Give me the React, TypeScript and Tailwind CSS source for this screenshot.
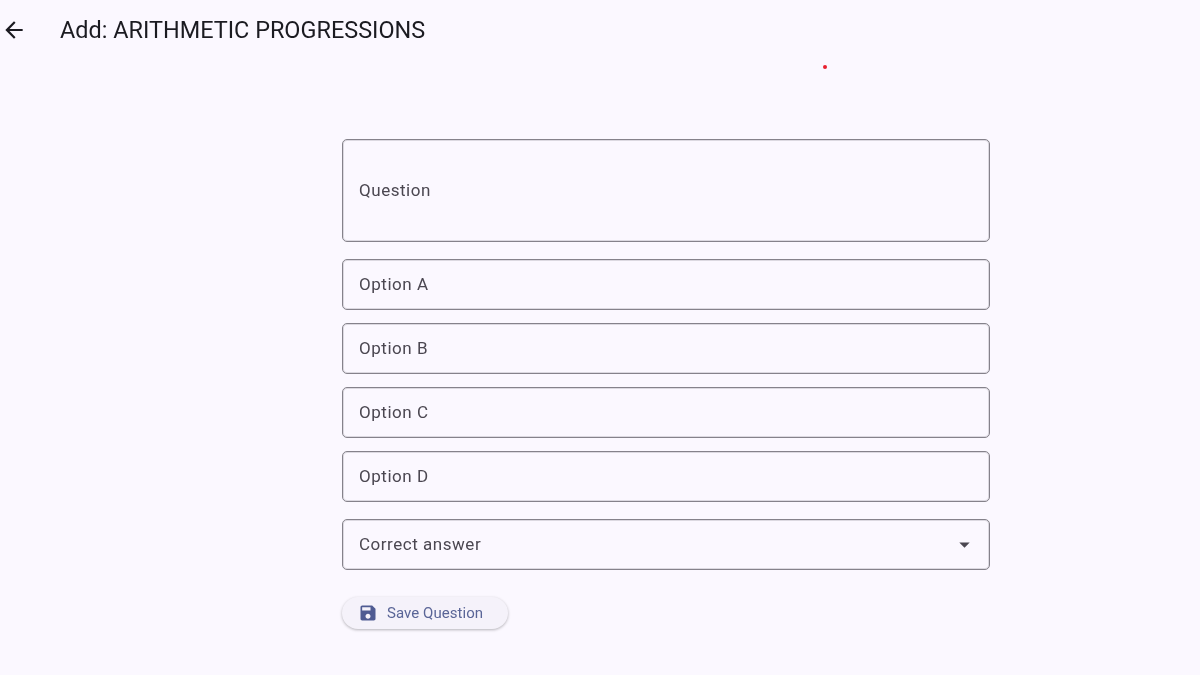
import React from 'react';

const options = ['Option A', 'Option B', 'Option C', 'Option D'];

function Field({ label, tall }: { label: string; tall?: boolean }) {
  return (
    <div
      className={`flex items-center rounded-[5px] border border-[#85828b] pl-[16px] text-[17px] tracking-[0.53px] text-[#4b4751] shadow-[inset_0_0_0_1px_#dcd9e1] ${tall ? 'h-[103px]' : 'h-[51px]'}`}
    >
      {label}
    </div>
  );
}

export default function App() {
  return (
    <div className="relative h-[675px] w-[1200px] overflow-hidden bg-[#fbf8ff] font-['Roboto',sans-serif]">
      {/* App bar */}
      <header className="flex h-[59px] items-center pl-[1px] will-change-transform">
        <div className="flex h-[26px] w-[26px] items-center justify-center">
          <svg width="26" height="26" viewBox="0 0 24 24" fill="#1b1b21">
            <path d="M20 11H7.83l5.59-5.59L12 4l-8 8 8 8 1.41-1.41L7.83 13H20v-2z" />
          </svg>
        </div>
        <h1 className="ml-[33px] text-[23.45px] leading-[28px] font-normal text-[#1b1b21]">
          Add: ARITHMETIC PROGRESSIONS
        </h1>
      </header>

      {/* Stray red dot */}
      <div className="absolute left-[823px] top-[65px] h-[4px] w-[4px] rounded-full bg-[#e8202f]" />

      {/* Form */}
      <main className="ml-[342px] mt-[80px] w-[648px] will-change-transform">
        <Field label="Question" tall />

        <div className="mt-[17px] flex flex-col gap-[13px]">
          {options.map((o) => (
            <Field key={o} label={o} />
          ))}
        </div>

        <div className="mt-[17px] flex h-[51px] items-center justify-between rounded-[5px] border border-[#85828b] pl-[16px] pr-[12px] text-[17px] tracking-[0.53px] text-[#4b4751] shadow-[inset_0_0_0_1px_#dcd9e1]">
          <span>Correct answer</span>
          <svg width="25" height="25" viewBox="0 0 24 24" fill="#4b4751">
            <path d="M7 10l5 5 5-5z" />
          </svg>
        </div>

        <button className="mt-[27px] flex h-[32px] w-[166px] items-center rounded-full bg-[#f5f2fa] pl-[16px] text-[15px] tracking-[0.05px] text-[#5a6597] shadow-[0_1px_3px_rgba(0,0,0,0.28)]">
          <svg width="20" height="20" viewBox="0 0 24 24" fill="#4f5b92">
            <path d="M17 3H5c-1.11 0-2 .9-2 2v14c0 1.1.89 2 2 2h14c1.1 0 2-.9 2-2V7l-4-4zm-5 16c-1.66 0-3-1.34-3-3s1.34-3 3-3 3 1.34 3 3-1.34 3-3 3zm3-10H5V5h10v4z" />
          </svg>
          <span className="ml-[9px]">Save Question</span>
        </button>
      </main>
    </div>
  );
}
